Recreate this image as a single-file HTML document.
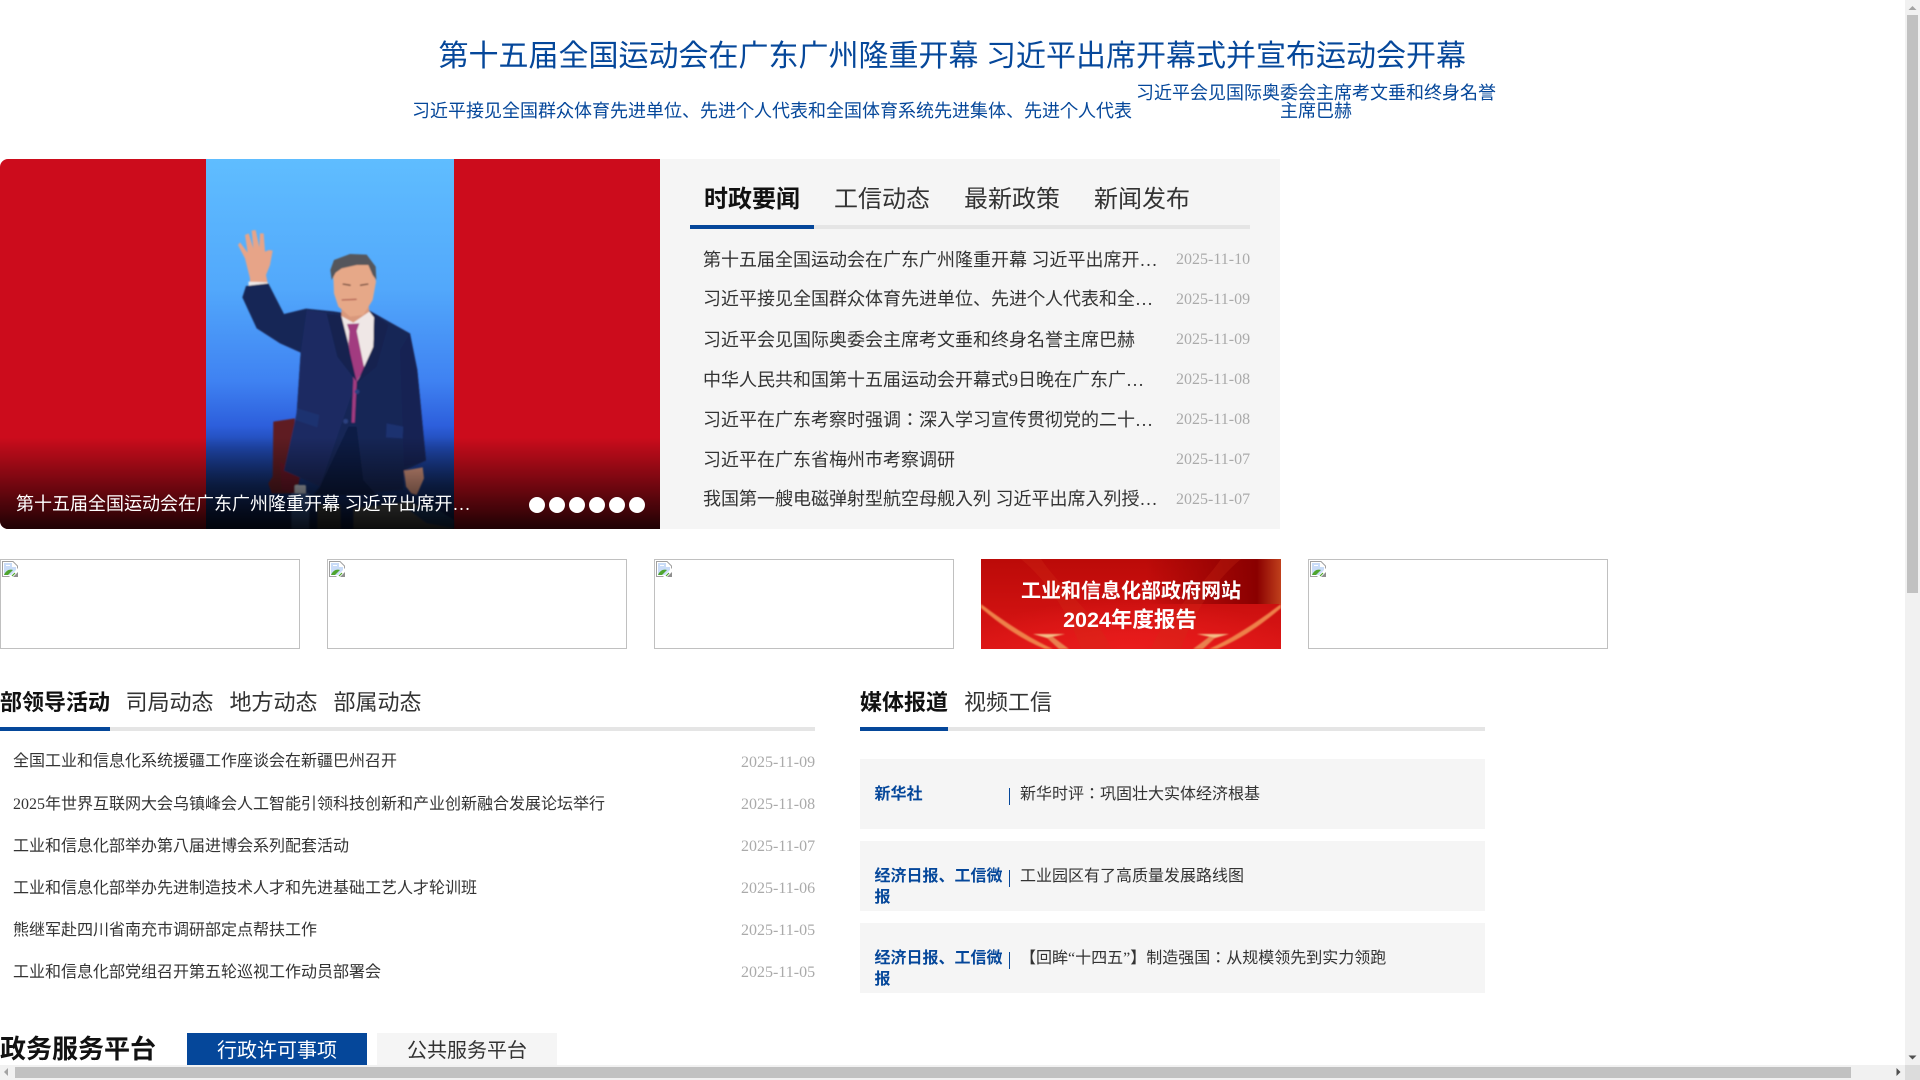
<!DOCTYPE html>
<html>
<head>
<meta charset="utf-8">
<title>工业和信息化部</title>
<style>
html,body{margin:0;padding:0;width:1920px;height:1080px;overflow:hidden;background:#fff}
body{position:relative;font-family:"Liberation Serif","Noto Sans CJK JP",serif;color:#333}
.a{position:absolute;white-space:nowrap}
.e{overflow:hidden;text-overflow:ellipsis}
.blue{color:#05479a}
.r{height:40px;line-height:40px;font-size:18px;left:703px;width:456px;color:#333}
.d{font-size:16px;color:#aaa;height:40px;line-height:40px}
.l{height:42px;line-height:42px;font-size:16px;left:13px;color:#333}
.ph{position:absolute;top:559px;width:298px;height:88px;border:1px solid #c0c0c0;background:#fff}
.ph svg{position:absolute;left:1px;top:1px}
.dot{position:absolute;top:497px;width:16px;height:16px;border-radius:50%;background:#fff}
.tab{position:absolute;height:40px;line-height:40px;font-size:24px;color:#333;white-space:nowrap}
.tb2{position:absolute;height:40px;line-height:40px;font-size:22px;color:#333;white-space:nowrap;top:682.5px}
.card{position:absolute;left:860px;width:625px;height:70px;background:#f5f5f5}
.lab{position:absolute;left:14.5px;top:25px;width:129px;font-size:16px;line-height:21px;font-weight:bold;color:#05479a}
.bar{position:absolute;left:148.5px;top:28.5px;width:1.5px;height:17px;background:#05479a}
.ct{position:absolute;left:160px;top:20.5px;font-size:16px;line-height:30px;color:#333;white-space:nowrap}
</style>
</head>
<body>

<div class="a blue" style="left:438.5px;top:37px;font-size:30px;line-height:40px">第十五届全国运动会在广东广州隆重开幕 习近平出席开幕式并宣布运动会开幕</div>
<div class="a blue" style="left:412px;top:101px;font-size:18px;line-height:20px">习近平接见全国群众体育先进单位、先进个人代表和全国体育系统先进集体、先进个人代表</div>
<div class="a blue" style="left:1136px;top:84px;width:360px;font-size:18px;line-height:18px;text-align:center;white-space:normal">习近平会见国际奥委会主席考文垂和终身名誉主席巴赫</div>

<!-- carousel -->
<div class="a" style="left:0;top:159px;width:660px;height:370px;background:#cc0c1c;border-radius:8px 0 0 8px;overflow:hidden">
  <svg style="position:absolute;left:200px;top:41px;overflow:visible" width="260" height="329" viewBox="0 0 780 987">
    <defs>
      <linearGradient id="sky" x1="0" y1="0" x2="0" y2="1">
        <stop offset="0" stop-color="#5fbdff"/>
        <stop offset=".35" stop-color="#52a8fb"/>
        <stop offset=".6" stop-color="#3f82f2"/>
        <stop offset=".72" stop-color="#2d5fdc"/>
        <stop offset=".78" stop-color="#1f47ad"/>
        <stop offset=".88" stop-color="#143070"/>
        <stop offset="1" stop-color="#0c1d4d"/>
      </linearGradient>
      <filter id="b" x="-5%" y="-5%" width="110%" height="110%"><feGaussianBlur stdDeviation="2"/></filter>
    </defs>
    <rect x="18" y="-123" width="744" height="1110" fill="url(#sky)"/>
    <g filter="url(#b)">
      <!-- chair -->
      <path d="M220 665 L285 655 L270 800 L290 880 L215 880 L205 850 L218 830Z" fill="#5e1f22"/>
      <path d="M240 785 L300 830 L290 880 L245 870Z" fill="#6a1426"/>
      <!-- hand -->
      <path d="M150 235 L135 175 L114 135 L120 127 L143 158 L135 105 L146 100 L160 145 L155 92 L167 90 L178 142 L180 100 L191 100 L195 155 L207 150 L218 152 L210 195 L198 225 L204 255 L150 262Z" fill="#e7a488"/>
      <!-- cuff -->
      <path d="M145 245 L203 247 L206 268 L150 292Z" fill="#eee9e8"/>
      <!-- jacket -->
      <path d="M127 292 L138 258 L205 250 L252 342 L318 326 L400 334 L440 340 L505 330 L630 400 L652 510 L678 782 L612 812 L610 870 L480 880 L380 865 L252 812 L290 640 L302 458 L240 430 L170 385Z" fill="#182757"/>
      <path d="M302 458 L290 640 L252 812 L360 860 L470 540 L400 340 L320 330Z" fill="#1a2b62"/>
      <path d="M630 400 L600 450 L612 800 L678 782 L652 510Z" fill="#152252"/>
      <!-- trousers -->
      <path d="M360 860 L445 680 L470 680 L490 840 L530 885 L340 885Z" fill="#0f1a45"/>
      <!-- shirt -->
      <path d="M424 348 L505 330 L522 352 L520 440 L492 512 L470 545 L445 430Z" fill="#efe7e6"/>
      <!-- tie -->
      <path d="M441 372 L478 370 L470 393 L493 505 L470 545 L464 668 L455 668 L460 540 L446 430 L448 394Z" fill="#a23a80"/>
      <!-- lapels -->
      <path d="M380 340 L424 348 L470 545 L412 470Z" fill="#142050"/>
      <path d="M505 330 L522 352 L520 440 L470 550 L530 500 L565 375Z" fill="#142050"/>
      <!-- pockets & buttons -->
      <path d="M292 625 L358 645 L352 682 L286 660Z" fill="#1c3070"/>
      <path d="M560 670 L610 680 L608 715 L558 712Z" fill="#1c3070"/>
      <circle cx="471" cy="575" r="7" fill="#2c4080"/>
      <circle cx="437" cy="664" r="7" fill="#2c4080"/>
      <!-- right hand -->
      <path d="M612 812 L668 802 L672 835 L650 885 L634 880 L618 860Z" fill="#d6957e"/>
      <!-- neck & face -->
      <path d="M425 310 L505 310 L508 335 L460 368 L424 348Z" fill="#d9987c"/>
      <path d="M400 230 L410 190 L460 175 L515 195 L528 245 L518 300 L490 345 L450 350 L415 320 L402 280Z" fill="#e6a888"/>
      <path d="M395 240 L391 210 L402 180 L450 162 L500 164 L527 200 L529 240 L518 225 L505 195 L470 195 L425 205 L407 218Z" fill="#55565c"/>
      <path d="M428 252 L452 256 M480 256 L505 252" stroke="#6b4438" stroke-width="4" fill="none"/>
      <path d="M425 300 L470 298" stroke="#b25e50" stroke-width="4" fill="none"/>
      <!-- desk items -->
      <path d="M460 925 L630 905 L762 975 L762 987 L460 987Z" fill="#5a5a58"/>
      <path d="M620 925 L700 920 L762 960 L762 985 L680 970Z" fill="#1c3f70"/>
      <rect x="284" y="855" width="34" height="28" rx="5" fill="#c0c4cc"/>
      <rect x="274" y="880" width="54" height="107" fill="#3a5f9c"/>
      <rect x="352" y="915" width="70" height="72" fill="#454545"/>
    </g>
  </svg>
  <div style="position:absolute;left:0;top:278px;width:660px;height:92px;background:linear-gradient(rgba(0,0,0,0),rgba(0,0,0,.85))"></div>
</div>
<div class="a e" style="left:16px;top:483.5px;width:455px;height:40px;line-height:40px;font-size:18px;color:#fff">第十五届全国运动会在广东广州隆重开幕 习近平出席开幕式并宣布运动会开幕</div>
<div class="dot" style="left:529px"></div>
<div class="dot" style="left:549px"></div>
<div class="dot" style="left:569px"></div>
<div class="dot" style="left:589px"></div>
<div class="dot" style="left:609px"></div>
<div class="dot" style="left:629px"></div>

<!-- news panel -->
<div class="a" style="left:660px;top:159px;width:620px;height:370px;background:#f5f5f5"></div>
<div class="tab" style="left:704px;top:179.5px;font-weight:bold;color:#111">时政要闻</div>
<div class="tab" style="left:834px;top:179.5px">工信动态</div>
<div class="tab" style="left:964px;top:179.5px">最新政策</div>
<div class="tab" style="left:1094px;top:179.5px">新闻发布</div>
<div class="a" style="left:690px;top:225px;width:560px;height:4px;background:#e5e5e5"></div>
<div class="a" style="left:690px;top:225px;width:124px;height:4px;background:#05479a"></div>

<div class="a e r" style="top:239.5px">第十五届全国运动会在广东广州隆重开幕 习近平出席开幕式并宣布运动会开幕</div><div class="a d" style="left:1176px;top:240px">2025-11-10</div>
<div class="a e r" style="top:279px">习近平接见全国群众体育先进单位、先进个人代表和全国体育系统先进集体、先进个人代表</div><div class="a d" style="left:1176px;top:280px">2025-11-09</div>
<div class="a e r" style="top:319.5px">习近平会见国际奥委会主席考文垂和终身名誉主席巴赫</div><div class="a d" style="left:1176px;top:320px">2025-11-09</div>
<div class="a e r" style="top:359.5px">中华人民共和国第十五届运动会开幕式9日晚在广东广州隆重举行</div><div class="a d" style="left:1176px;top:360px">2025-11-08</div>
<div class="a e r" style="top:399.5px">习近平在广东考察时强调：深入学习宣传贯彻党的二十届四中全会精神</div><div class="a d" style="left:1176px;top:400px">2025-11-08</div>
<div class="a e r" style="top:439.5px">习近平在广东省梅州市考察调研</div><div class="a d" style="left:1176px;top:440px">2025-11-07</div>
<div class="a e r" style="top:479px">我国第一艘电磁弹射型航空母舰入列 习近平出席入列授旗仪式并登舰视察</div><div class="a d" style="left:1176px;top:480px">2025-11-07</div>

<!-- image cards -->
<svg width="0" height="0" style="position:absolute">
  <defs>
    <g id="broken">
      <path d="M.5.5H11L15.5 5V15.5H.5Z" fill="#fff" stroke="#a0a0a0"/>
      <path d="M2 2H10V6H14V14H2Z" fill="#c9dcf8"/>
      <path d="M2 14C4 9 8 8 11 9L6 14Z" fill="#4fa52e"/>
      <path d="M7 16L16 7V16Z" fill="#fff"/>
      <path d="M11 16L16 11V16Z" fill="#8f8f8f"/>
      <path d="M10 15L13 12" stroke="#4fa52e" stroke-width="1.2"/>
      <path d="M4 4H8V5H4Z" fill="#fff"/>
    </g>
  </defs>
</svg>
<div class="ph" style="left:0"><svg width="16" height="16" viewBox="0 0 16 16"><use href="#broken"/></svg></div>
<div class="ph" style="left:327px"><svg width="16" height="16" viewBox="0 0 16 16"><use href="#broken"/></svg></div>
<div class="ph" style="left:654px"><svg width="16" height="16" viewBox="0 0 16 16"><use href="#broken"/></svg></div>
<div class="ph" style="left:1308px"><svg width="16" height="16" viewBox="0 0 16 16"><use href="#broken"/></svg></div>

<!-- red banner -->
<svg class="a" style="left:981px;top:559px" width="300" height="90" viewBox="0 0 300 90">
  <defs>
    <linearGradient id="rb" x1="0" y1="0" x2="0" y2="1"><stop offset="0" stop-color="#bb0a08"/><stop offset="1" stop-color="#dc1616"/></linearGradient>
    <radialGradient id="rc" cx=".5" cy="1" r=".55"><stop offset="0" stop-color="#ea1c1c"/><stop offset="1" stop-color="#ea1c1c" stop-opacity="0"/></radialGradient>
    <linearGradient id="rd" x1="0" y1="0" x2="1" y2="0"><stop offset=".55" stop-color="#8a0000" stop-opacity="0"/><stop offset=".92" stop-color="#8a0000"/><stop offset="1" stop-color="#c0401c"/></linearGradient>
    <filter id="s"><feGaussianBlur stdDeviation=".8"/></filter>
  </defs>
  <rect width="300" height="90" fill="url(#rb)"/>
  <rect width="300" height="45" fill="url(#rd)"/>
  <rect width="300" height="90" fill="url(#rc)"/>
  <path d="M60 0C80 30 120 60 130 90H100C90 60 70 25 40 0Z" fill="#d03018" opacity=".3"/>
  <path d="M240 0C220 30 180 60 170 90H200C210 60 230 25 260 0Z" fill="#d03018" opacity=".25"/>
  <g filter="url(#s)">
    <path d="M0 45C25 64 50 80 72 90H64C40 80 20 66 0 49Z" fill="#ee8048"/>
    <path d="M300 45C275 64 250 80 228 90H236C260 80 280 66 300 49Z" fill="#ee8048"/>
    <path d="M52 75L84 75L66 79Z" fill="#f4bd85"/>
    <path d="M248 75L216 75L234 79Z" fill="#f4bd85"/>
    <path d="M66 79L78 90H88L72 78Z" fill="#e98050"/>
    <path d="M234 79L222 90H212L228 78Z" fill="#e98050"/>
  </g>
  <text x="150" y="38.5" text-anchor="middle" font-family="'Liberation Sans','Noto Sans CJK SC',sans-serif" font-weight="bold" font-size="20" fill="#fff">工业和信息化部政府网站</text>
  <text x="149" y="68" text-anchor="middle" font-family="'Liberation Sans','Noto Sans CJK SC',sans-serif" font-weight="bold" font-size="21.5" fill="#fff">2024年度报告</text>
</svg>

<!-- left list -->
<div class="tb2" style="left:0;font-weight:bold;color:#111">部领导活动</div>
<div class="tb2" style="left:125.5px">司局动态</div>
<div class="tb2" style="left:229.5px">地方动态</div>
<div class="tb2" style="left:333.5px">部属动态</div>
<div class="a" style="left:0;top:727px;width:815px;height:4px;background:#e5e5e5"></div>
<div class="a" style="left:0;top:727px;width:110px;height:4px;background:#05479a"></div>

<div class="a l" style="top:741px">全国工业和信息化系统援疆工作座谈会在新疆巴州召开</div><div class="a d" style="left:741px;top:743px">2025-11-09</div>
<div class="a l" style="top:783.5px">2025年世界互联网大会乌镇峰会人工智能引领科技创新和产业创新融合发展论坛举行</div><div class="a d" style="left:741px;top:785px">2025-11-08</div>
<div class="a l" style="top:825.5px">工业和信息化部举办第八届进博会系列配套活动</div><div class="a d" style="left:741px;top:827px">2025-11-07</div>
<div class="a l" style="top:867.5px">工业和信息化部举办先进制造技术人才和先进基础工艺人才轮训班</div><div class="a d" style="left:741px;top:869px">2025-11-06</div>
<div class="a l" style="top:909.5px">熊继军赴四川省南充市调研部定点帮扶工作</div><div class="a d" style="left:741px;top:911px">2025-11-05</div>
<div class="a l" style="top:951.5px">工业和信息化部党组召开第五轮巡视工作动员部署会</div><div class="a d" style="left:741px;top:953px">2025-11-05</div>

<!-- right media -->
<div class="tb2" style="left:860px;font-weight:bold;color:#111">媒体报道</div>
<div class="tb2" style="left:964px">视频工信</div>
<div class="a" style="left:860px;top:727px;width:625px;height:4px;background:#e5e5e5"></div>
<div class="a" style="left:860px;top:727px;width:88px;height:4px;background:#05479a"></div>

<div class="card" style="top:759px"><div class="lab">新华社</div><div class="bar"></div><div class="ct">新华时评：巩固壮大实体经济根基</div></div>
<div class="card" style="top:841px"><div class="lab">经济日报、工信微报</div><div class="bar"></div><div class="ct">工业园区有了高质量发展路线图</div></div>
<div class="card" style="top:923px"><div class="lab">经济日报、工信微报</div><div class="bar"></div><div class="ct">【回眸“十四五”】制造强国：从规模领先到实力领跑</div></div>

<!-- services -->
<div class="a" style="left:0;top:1030px;font-size:26px;line-height:40px;font-weight:bold;color:#111">政务服务平台</div>
<div class="a" style="left:187px;top:1033px;width:180px;height:32px;background:#05479a"></div>
<div class="a" style="left:377px;top:1033px;width:180px;height:32px;background:#f5f5f5"></div>
<div class="a" style="left:217px;top:1036px;font-size:20px;line-height:30px;color:#fff">行政许可事项</div>
<div class="a" style="left:407px;top:1036px;font-size:20px;line-height:30px;color:#333">公共服务平台</div>

<!-- fake scrollbars -->
<div class="a" style="left:1905px;top:0;width:15px;height:1065px;background:#f1f1f1"></div>
<div class="a" style="left:1907px;top:15px;width:11px;height:578px;background:#c1c1c1"></div>
<div class="a" style="left:0;top:1065px;width:1905px;height:15px;background:#f1f1f1"></div>
<div class="a" style="left:15px;top:1067px;width:1836px;height:11px;background:#c1c1c1"></div>
<div class="a" style="left:1905px;top:1065px;width:15px;height:15px;background:#dcdcdc"></div>
<svg class="a" style="left:0;top:0" width="1920" height="1080" viewBox="0 0 1920 1080">
  <path d="M1912.5 6L1916.5 10H1908.5Z" fill="#a3a3a3"/>
  <path d="M1912.5 1059.5L1916.5 1055.5H1908.5Z" fill="#505050"/>
  <path d="M4 1072L8 1068V1076Z" fill="#a3a3a3"/>
  <path d="M1900.5 1072L1896.5 1068V1076Z" fill="#505050"/>
</svg>
</body>
</html>
